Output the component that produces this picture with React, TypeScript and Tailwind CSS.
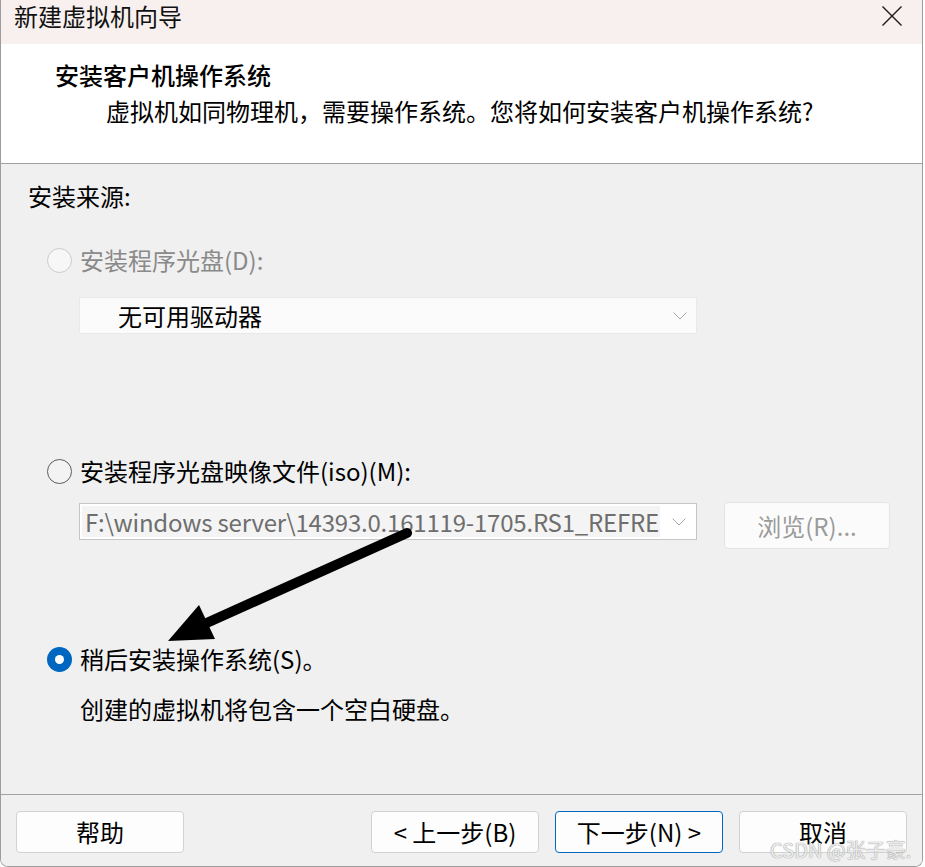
import React from "react";

const font = { fontFamily: '"Noto Sans CJK SC", "Noto Sans", sans-serif' };

function Radio({ kind }: { kind: "disabled" | "normal" | "checked" }) {
  if (kind === "checked") {
    return (
      <div className="w-[25px] h-[25px] rounded-full bg-[#0067c0] flex items-center justify-center shrink-0">
        <div className="w-[9px] h-[9px] rounded-full bg-white" />
      </div>
    );
  }
  if (kind === "disabled") {
    return <div className="w-[25px] h-[25px] rounded-full border-[1.5px] border-[#cbcbcb] bg-[#f7f7f7] shrink-0" />;
  }
  return <div className="w-[25px] h-[25px] rounded-full border-[1.5px] border-[#5c5c5c] bg-[#f3f3f3] shrink-0" />;
}

function Chevron({ color = "#9a9a9a" }: { color?: string }) {
  return (
    <svg width="14" height="8" viewBox="0 0 14 8" fill="none">
      <path d="M0.5 0.5 L7 7 L13.5 0.5" stroke={color} strokeWidth="1" />
    </svg>
  );
}

function Btn({ children, primary }: { children: React.ReactNode; primary?: boolean }) {
  return (
    <div
      className={
        "w-[168px] h-[42px] rounded-[4px] bg-[#fdfdfd] flex items-center justify-center text-[24px] leading-[32px] text-black border " +
        (primary ? "border-[#0067c0]" : "border-[#d2d2d2]")
      }
    >
      {children}
    </div>
  );
}

export default function App() {
  return (
    <div className="w-[925px] h-[867px] bg-white relative overflow-hidden" style={font}>
      <div className="w-[923px] h-[867px] flex flex-col border-x border-b border-[#9c9c9c] rounded-b-[8px] overflow-hidden">
        {/* title bar */}
        <div className="h-[44px] bg-[#f7f0ee] flex items-start justify-between shrink-0">
          <div className="pl-[13px] pt-[0px] text-[24px] leading-[32px] text-[#111]">新建虚拟机向导</div>
          <div className="pt-[6px] pr-[20px]">
            <svg width="20" height="20" viewBox="0 0 20 20">
              <path d="M0.5 0.5 L19.5 19.5 M19.5 0.5 L0.5 19.5" stroke="#1a1a1a" strokeWidth="1.4" />
            </svg>
          </div>
        </div>
        {/* header */}
        <div className="h-[120px] bg-white border-b border-[#a0a0a0] shrink-0 flex flex-col">
          <div className="pl-[54px] pt-[15px] text-[24px] leading-[32px] font-medium text-black">安装客户机操作系统</div>
          <div className="pl-[105px] pt-[4px] text-[24px] leading-[32px] text-black">
            虚拟机如同物理机，需要操作系统。您将如何安装客户机操作系统?
          </div>
        </div>
        {/* body */}
        <div className="h-[631px] bg-[#f0f0f0] border-b border-[#a3a3a3] shrink-0 flex flex-col">
          <div className="pl-[27px] pt-[16px] text-[24px] leading-[32px] text-black">安装来源:</div>

          <div className="mt-[32px] pl-[46px] flex items-center gap-[8px] h-[32px]">
            <Radio kind="disabled" />
            <span className="text-[24px] leading-[32px] text-[#8a8a8a]">安装程序光盘(D):</span>
          </div>

          <div className="mt-[21px] ml-[78px] w-[618px] h-[37px] bg-[#fbfbfb] border border-[#e9e9e9] rounded-[2px] flex items-center justify-between pl-[38px] pr-[9px]">
            <span className="text-[24px] leading-[32px] text-black">无可用驱动器</span>
            <Chevron color="#a8a8a8" />
          </div>

          <div className="mt-[121px] pl-[46px] flex items-center gap-[8px] h-[32px]">
            <Radio kind="normal" />
            <span className="text-[24px] leading-[32px] text-black">安装程序光盘映像文件(iso)(M):</span>
          </div>

          <div className="mt-[15px] ml-[78px] flex items-start">
            <div className="mt-[1px] w-[618px] h-[37px] bg-white border border-[#c6c6c6] flex items-center">
              <div className="ml-[2px] w-[578px] h-[31px] bg-[#f4f4f4] overflow-hidden whitespace-nowrap pl-[3px] text-[24px] leading-[31px] tracking-[-0.2px] text-[#6e6e6e]">
                F:\windows server\14393.0.161119-1705.RS1_REFRES
              </div>
              <div className="ml-[12px]">
                <Chevron color="#a8a8a8" />
              </div>
            </div>
            <div className="ml-[27px] w-[166px] h-[47px] bg-[#fbfbfb] border border-[#e4e4e4] rounded-[4px] flex items-center justify-center text-[24px] leading-[32px] text-[#9b9b9b]">
              浏览(R)...
            </div>
          </div>

          <div className="mt-[94px] pl-[46px] flex items-center gap-[8px] h-[32px]">
            <Radio kind="checked" />
            <span className="text-[24px] leading-[32px] text-black">稍后安装操作系统(S)。</span>
          </div>

          <div className="mt-[18px] pl-[79px] text-[24px] leading-[32px] text-black">创建的虚拟机将包含一个空白硬盘。</div>
        </div>
        {/* footer */}
        <div className="flex-1 bg-[#f0f0f0] flex items-start pt-[16px] px-[15px]">
          <Btn>帮助</Btn>
          <div className="flex-1" />
          <div className="flex gap-[16px]">
            <Btn>&lt; 上一步(B)</Btn>
            <Btn primary>下一步(N) &gt;</Btn>
            <Btn>取消</Btn>
          </div>
        </div>
      </div>

      {/* annotation arrow */}
      <svg className="absolute left-0 top-0 pointer-events-none" width="925" height="867" viewBox="0 0 925 867">
        <line x1="407" y1="533" x2="200" y2="626" stroke="#000" strokeWidth="10" strokeLinecap="round" />
        <polygon points="168,641 199,605 215,639" fill="#000" />
      </svg>

      {/* watermark */}
      <div className="absolute left-[770px] top-[837px] text-[20px] leading-[26px] text-[#ececec] [text-shadow:0_0_1px_#999,0_0_1px_#999] whitespace-nowrap">
        CSDN @张子豪.
      </div>
    </div>
  );
}
